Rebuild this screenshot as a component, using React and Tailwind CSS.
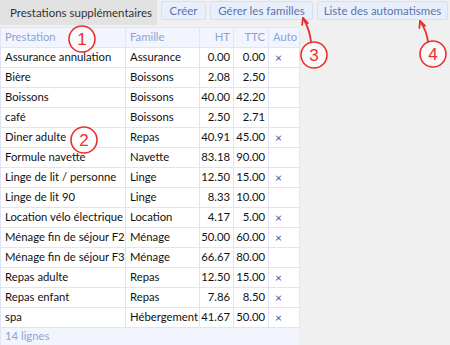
const rows = [
  ["Assurance annulation", "Assurance", "0.00", "0.00", true],
  ["Bière", "Boissons", "2.08", "2.50", false],
  ["Boissons", "Boissons", "40.00", "42.20", false],
  ["café", "Boissons", "2.50", "2.71", false],
  ["Diner adulte", "Repas", "40.91", "45.00", true],
  ["Formule navette", "Navette", "83.18", "90.00", false],
  ["Linge de lit / personne", "Linge", "12.50", "15.00", true],
  ["Linge de lit 90", "Linge", "8.33", "10.00", false],
  ["Location vélo électrique", "Location", "4.17", "5.00", true],
  ["Ménage fin de séjour F2", "Ménage", "50.00", "60.00", true],
  ["Ménage fin de séjour F3", "Ménage", "66.67", "80.00", false],
  ["Repas adulte", "Repas", "12.50", "15.00", true],
  ["Repas enfant", "Repas", "7.86", "8.50", true],
  ["spa", "Hébergement", "41.67", "50.00", true],
];

const cols = "grid grid-cols-[125px_74px_34px_35px_31px]";
const cell = "h-[20px] flex items-center border-r border-b border-[#e3e3f6] px-[4px] whitespace-nowrap";
const num = "h-[20px] flex items-center justify-end border-r border-b border-[#e3e3f6] pr-[3px] whitespace-nowrap";
const btn = "ml-[4px] mt-[1px] h-[19px] flex items-center justify-center whitespace-nowrap bg-[#e8effc] border border-[#d6e0f5] rounded-[2px] text-[#5e74a8]";

function Marker({ cx, cy, n }) {
  return (
    <g>
      <circle cx={cx} cy={cy} r="13" fill="white" fillOpacity="0.6" stroke="#e8312f" strokeWidth="1.6" />
      <text x={cx} y={cy + 6} textAnchor="middle" fontSize="17" fill="#e8312f" fontFamily="Liberation Sans, Arial, sans-serif">
        {n}
      </text>
    </g>
  );
}

function Arrow({ x1, y1, x2, y2 }) {
  const a = Math.atan2(y2 - y1, x2 - x1);
  const l = 7;
  const p1 = [x2 - l * Math.cos(a - 0.45), y2 - l * Math.sin(a - 0.45)];
  const p2 = [x2 - l * Math.cos(a + 0.45), y2 - l * Math.sin(a + 0.45)];
  return (
    <g stroke="#e8312f" strokeWidth="1.8" fill="none" strokeLinecap="round" strokeLinejoin="round">
      <path d={`M${x1} ${y1} Q${(x1 + x2) / 2 + 3} ${(y1 + y2) / 2} ${x2} ${y2}`} />
      <path d={`M${p1[0]} ${p1[1]} L${x2} ${y2} L${p2[0]} ${p2[1]}`} />
    </g>
  );
}

export default function App() {
  return (
    <div className="relative w-[450px] h-[345px] overflow-hidden bg-[#f0f0f0] font-['Lato',sans-serif] text-[11.3px] text-[#111]">
      <div className="flex h-[27px] items-start text-[11.5px]">
        <div className="w-[157px] h-[25px] bg-[#e2e2e2] flex items-center pl-[10px] whitespace-nowrap text-[#333]">
          Prestations supplémentaires
        </div>
        <div className={`${btn} w-[45px]`}>Créer</div>
        <div className={`${btn} w-[103px]`}>Gérer les familles</div>
        <div className={`${btn} w-[131px]`}>Liste des automatismes</div>
      </div>

      <div className="w-[299px] bg-white border-t border-l border-[#e3e3f6]">
        <div className={`${cols} bg-[#f2f5fd] text-[#8ea2d4]`}>
          <div className={cell}>Prestation</div>
          <div className={cell}>Famille</div>
          <div className={num}>HT</div>
          <div className={num}>TTC</div>
          <div className={`${cell} px-[3px]`}>Auto</div>
        </div>
        {rows.map((r) => (
          <div key={r[0]} className={cols}>
            <div className={cell}>{r[0]}</div>
            <div className={cell}>{r[1]}</div>
            <div className={num}>{r[2]}</div>
            <div className={num}>{r[3]}</div>
            <div className={`${cell} text-[#3a5d9c] pl-[6px] text-[12px]`}>{r[4] ? "×" : ""}</div>
          </div>
        ))}
        <div className="h-[17px] bg-[#f2f5fd] flex items-center px-[4px] text-[#8ea2d4]">14 lignes</div>
      </div>

      <svg className="absolute inset-0 pointer-events-none" width="450" height="345">
        <Arrow x1={311} y1={42} x2={303} y2={18} />
        <Arrow x1={428} y1={42} x2={420} y2={21} />
        <Marker cx={82} cy={39} n="1" />
        <Marker cx={84} cy={140} n="2" />
        <Marker cx={314} cy={55} n="3" />
        <Marker cx={433} cy={54} n="4" />
      </svg>
    </div>
  );
}
